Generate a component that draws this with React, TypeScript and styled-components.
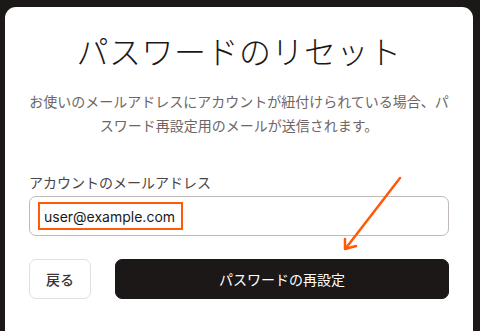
import styled, { createGlobalStyle } from "styled-components";

const GlobalStyle = createGlobalStyle`
  html, body {
    margin: 0;
    padding: 0;
    background: #1c1818;
  }
  body {
    font-family: Inter, "Noto Sans CJK JP", sans-serif;
  }
`;

const Page = styled.div`
  height: 331px;
  overflow: hidden;
  padding: 7px 7px 0 5px;
  box-sizing: border-box;
`;

const Card = styled.div`
  position: relative;
  background: #fff;
  border-radius: 11px 11px 0 0;
  padding: 24px 24px 40px;
  height: 360px;
  box-sizing: border-box;
`;

const Title = styled.h1`
  margin: 0;
  text-align: center;
  font-family: "Noto Sans CJK JP", sans-serif;
  font-weight: 300;
  font-size: 32px;
  line-height: 38px;
  color: #1c1818;
  letter-spacing: 0.5px;
`;

const Description = styled.p`
  margin: 20px 0 0;
  text-align: center;
  font-family: "Noto Sans CJK JP", sans-serif;
  font-size: 14px;
  line-height: 24px;
  color: #6e6666;
`;

const Label = styled.label`
  display: block;
  margin-top: 35px;
  font-family: "Noto Sans CJK JP", sans-serif;
  font-size: 14px;
  line-height: 20px;
  color: #4a4444;
`;

const Field = styled.div`
  margin-top: 4px;
  height: 40px;
  box-sizing: border-box;
  border: 1px solid #c2b9b9;
  border-radius: 7px;
  padding: 0 8px;
  display: flex;
  align-items: center;
`;

const Highlight = styled.span`
  border: 2px solid #ff5a0a;
  padding: 0 6px 0 4px;
  height: 28px;
  box-sizing: border-box;
  display: flex;
  align-items: center;
  font-family: Inter, sans-serif;
  font-size: 14px;
  color: #1c1818;
`;

const Actions = styled.div`
  margin-top: 23px;
  display: flex;
  gap: 24px;
`;

const Button = styled.button<{ $primary?: boolean }>`
  height: 40px;
  border-radius: 7px;
  font-family: "Noto Sans CJK JP", sans-serif;
  font-size: 14px;
  font-weight: ${({ $primary }) => ($primary ? 400 : 500)};
  cursor: pointer;
  border: 1px solid ${({ $primary }) => ($primary ? "#1c1818" : "#e6dede")};
  background: ${({ $primary }) => ($primary ? "#1c1818" : "#fff")};
  color: ${({ $primary }) => ($primary ? "#fff" : "#3a3434")};
  width: ${({ $primary }) => ($primary ? "auto" : "62px")};
  flex: ${({ $primary }) => ($primary ? 1 : "none")};
`;

const Arrow = styled.svg`
  position: absolute;
  left: 335px;
  top: 165px;
  overflow: visible;
`;

export default function App() {
  return (
    <>
      <GlobalStyle />
      <Page>
        <Card>
          <Title>パスワードのリセット</Title>
          <Description>
            お使いのメールアドレスにアカウントが紐付けられている場合、パ
            <br />
            スワード再設定用のメールが送信されます。
          </Description>
          <Label>アカウントのメールアドレス</Label>
          <Field>
            <Highlight>user@example.com</Highlight>
          </Field>
          <Actions>
            <Button>戻る</Button>
            <Button $primary>パスワードの再設定</Button>
          </Actions>
          <Arrow width="70" height="90" viewBox="0 0 70 90">
            <g
              stroke="#ff5a0a"
              strokeWidth="2.5"
              strokeLinecap="round"
              strokeLinejoin="round"
              fill="none"
            >
              <path d="M60 6 L6 76" />
              <path d="M5 67 L5 77 L16 74" />
            </g>
          </Arrow>
        </Card>
      </Page>
    </>
  );
}
